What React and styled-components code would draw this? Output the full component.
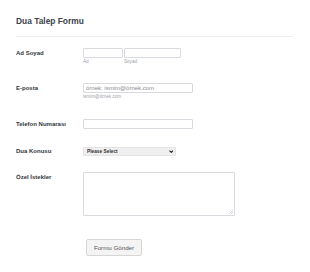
import React from "react";
import styled, { createGlobalStyle } from "styled-components";

const Global = createGlobalStyle`
  body {
    margin: 0;
    background: #ffffff;
    font-family: "Liberation Sans", Arial, sans-serif;
  }
`;

const Form = styled.form`
  width: 310px;
  padding: 16px 17px 0 16px;
  box-sizing: border-box;
`;

const Title = styled.h1`
  margin: 0;
  font-size: 8.4px;
  line-height: 11px;
  font-weight: 700;
  color: #3a3f4b;
`;

const Divider = styled.hr`
  margin: 9px 0 0;
  border: 0;
  border-top: 1px solid #eceef2;
  width: 277px;
`;

const Row = styled.div`
  display: flex;
  align-items: flex-start;
  margin-top: ${(p) => p.$top}px;
`;

const Label = styled.label`
  width: 67px;
  flex: none;
  font-size: 6px;
  line-height: 10px;
  font-weight: 700;
  color: #33363d;
`;

const Field = styled.div`
  display: flex;
  flex-direction: column;
`;

const Pair = styled.div`
  display: flex;
  gap: 1px;
`;

const Input = styled.input`
  box-sizing: border-box;
  width: ${(p) => p.$w}px;
  height: 10px;
  margin: 0;
  padding: 0 2px;
  border: 1px solid #d8dae0;
  border-radius: 1px;
  font-family: "Liberation Sans", Arial, sans-serif;
  font-size: 6px;
  color: #555;
  outline: none;

  &::placeholder {
    color: #8a8a8a;
  }
`;

const Sub = styled.span`
  display: block;
  margin-top: 1px;
  font-size: 4.6px;
  line-height: 6px;
  color: #9ea2aa;
`;

const SelectWrap = styled.div`
  position: relative;
  display: flex;
  width: 93px;
  height: 9px;
  margin-top: 1px;
`;

const Select = styled.select`
  display: block;
  appearance: none;
  -webkit-appearance: none;
  box-sizing: border-box;
  width: 93px;
  height: 9px;
  min-height: 0;
  margin: 0;
  padding: 0 3px;
  border: 1px solid #e4e4e4;
  border-radius: 1px;
  background: #efefef;
  font-family: "Liberation Sans", Arial, sans-serif;
  font-size: 4.8px;
  line-height: 7px;
  font-weight: 700;
  color: #333;
  outline: none;
`;

const Chevron = styled.svg`
  position: absolute;
  right: 3px;
  top: 2.5px;
  width: 4.5px;
  height: 3.5px;
  pointer-events: none;
`;

const Area = styled.textarea`
  box-sizing: border-box;
  width: 152px;
  height: 44px;
  margin: 0;
  border: 1px solid #d8dae0;
  border-radius: 1px;
  resize: none;
  outline: none;
`;

const AreaWrap = styled.div`
  position: relative;
  display: flex;
`;

const Grip = styled.svg`
  position: absolute;
  right: 2px;
  bottom: 2px;
  width: 4px;
  height: 4px;
  pointer-events: none;
`;

const Submit = styled.button`
  margin-left: 70px;
  width: 56px;
  height: 17px;
  padding: 0;
  border: 1px solid #d6d6d6;
  border-radius: 2px;
  background: #f4f4f4;
  font-family: "Liberation Sans", Arial, sans-serif;
  font-size: 6.2px;
  color: #555;

  &:hover {
    cursor: pointer;
  }
`;

export default () => {
  return (
    <>
      <Global />
      <Form onSubmit={(e) => e.preventDefault()}>
        <Title>Dua Talep Formu</Title>
        <Divider />

        <Row $top={11}>
          <Label>Ad Soyad</Label>
          <Pair>
            <Field>
              <Input $w={40} />
              <Sub>Ad</Sub>
            </Field>
            <Field>
              <Input $w={57} />
              <Sub>Soyad</Sub>
            </Field>
          </Pair>
        </Row>

        <Row $top={18}>
          <Label>E-posta</Label>
          <Field>
            <Input $w={110} placeholder="örnek: ismim@örnek.com" />
            <Sub>ismim@örnek.com</Sub>
          </Field>
        </Row>

        <Row $top={19}>
          <Label>Telefon Numarası</Label>
          <Input $w={110} />
        </Row>

        <Row $top={17}>
          <Label>Dua Konusu</Label>
          <SelectWrap>
            <Select defaultValue="">
              <option value="">Please Select</option>
            </Select>
            <Chevron viewBox="0 0 10 8">
              <path d="M1 1.5 L5 5.5 L9 1.5" fill="none" stroke="#222" strokeWidth="2.4" />
            </Chevron>
          </SelectWrap>
        </Row>

        <Row $top={16}>
          <Label>Özel İstekler</Label>
          <AreaWrap>
            <Area />
            <Grip viewBox="0 0 4 4">
              <path d="M4 0 L0 4 M4 2 L2 4" stroke="#b5b5b5" strokeWidth="0.6" />
            </Grip>
          </AreaWrap>
        </Row>

        <Row $top={23}>
          <Submit type="submit">Formu Gönder</Submit>
        </Row>
      </Form>
    </>
  );
};
